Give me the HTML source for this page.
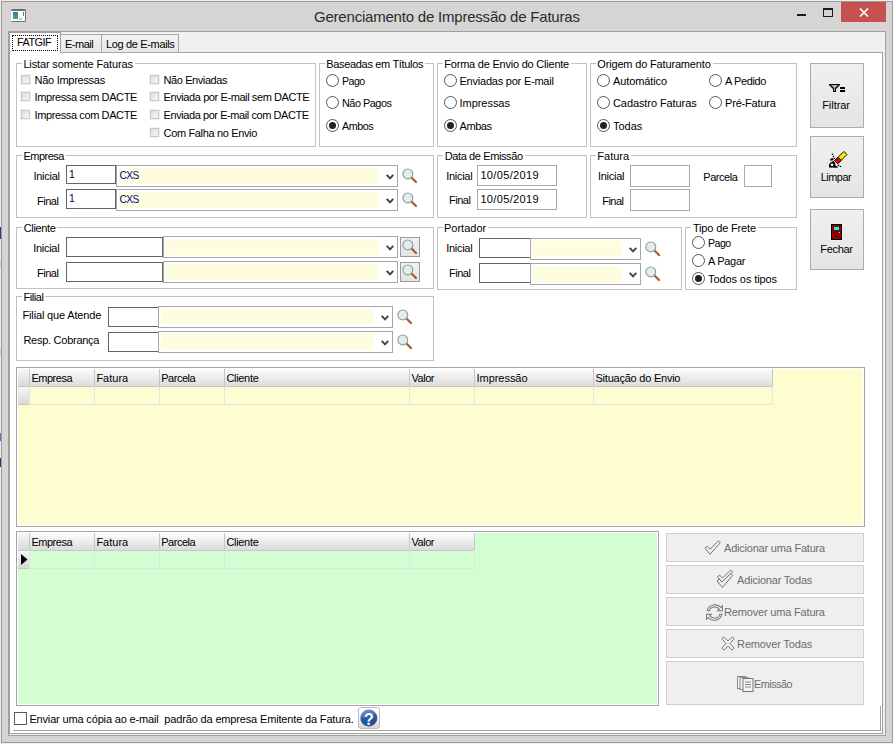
<!DOCTYPE html>
<html><head><meta charset="utf-8"><style>
html,body{margin:0;padding:0;}
body{width:893px;height:744px;position:relative;overflow:hidden;background:#eeeeee;font-family:"Liberation Sans", sans-serif;}
body div, body svg{position:absolute;}
div div{position:absolute;}
.t{white-space:pre;line-height:1;}
</style></head><body>
<div style="left:1px;top:1px;width:892px;height:742px;border:1px solid #9b9b9b;box-sizing:border-box;background:#d6d5d3"></div>
<svg style="left:11px;top:9px" width="15" height="13" viewBox="0 0 15 13"><defs><linearGradient id="ig" x1="0" y1="0" x2="0" y2="1"><stop offset="0" stop-color="#3d6db8"/><stop offset="0.5" stop-color="#3f9080"/><stop offset="1" stop-color="#4cb050"/></linearGradient><linearGradient id="ig2" x1="0" y1="0" x2="0" y2="1"><stop offset="0" stop-color="#3d6db8"/><stop offset="1" stop-color="#4cb050"/></linearGradient></defs><rect x="0" y="0" width="15" height="13" rx="1.5" fill="#6e7173"/><rect x="0" y="2" width="14" height="10" fill="#fff"/><rect x="2" y="3" width="5" height="7" fill="url(#ig)"/><rect x="12" y="3" width="1" height="4" fill="url(#ig2)"/><rect x="8" y="9" width="3" height="2" fill="#c8c8c8"/></svg>
<div class="t" style="left:314px;top:9.00px;font-size:15px;color:#2b2b2b;letter-spacing:-0.21px">Gerenciamento de Impressão de Faturas</div>
<div style="left:797px;top:14px;width:9px;height:2px;background:#1a1a1a"></div>
<div style="left:823px;top:8px;width:10px;height:9px;border:1px solid #1a1a1a;border-top-width:2px;box-sizing:border-box"></div>
<div style="left:841px;top:2px;width:45px;height:20px;background:#c75050"></div>
<svg style="left:859px;top:8px" width="10" height="9" viewBox="0 0 10 9"><path d="M1 0.5 L9 8.5 M9 0.5 L1 8.5" stroke="#fff" stroke-width="1.6"/></svg>
<div style="left:0px;top:227px;width:1px;height:12px;background:#2a3a8a"></div>
<div style="left:0px;top:260px;width:1px;height:8px;background:#a8e4f4"></div>
<div style="left:0px;top:348px;width:1px;height:8px;background:#ecd2b0"></div>
<div style="left:0px;top:433px;width:1px;height:8px;background:#4a7ad0"></div>
<div style="left:0px;top:458px;width:1px;height:9px;background:#2a3a90"></div>
<div style="left:8px;top:31px;width:878px;height:705px;border:1px solid #a0a0a0;box-sizing:border-box;background:#f0f0f0"></div>
<div style="left:9px;top:52px;width:874px;height:682px;border:1px solid #a0a0a0;box-sizing:border-box;background:#fff"></div>
<div style="left:60px;top:34px;width:42px;height:19px;border:1px solid #a9a9a9;box-sizing:border-box;background:linear-gradient(#f2f2f2,#e8e8e8)"></div>
<div style="left:101px;top:34px;width:78px;height:19px;border:1px solid #a9a9a9;box-sizing:border-box;background:linear-gradient(#f2f2f2,#e8e8e8)"></div>
<div style="left:9px;top:32px;width:52px;height:21px;border:1px solid #a0a0a0;border-bottom:none;box-sizing:border-box;background:#fff"></div>
<div style="left:12px;top:35px;width:46px;height:16px;border:1px dotted #000;box-sizing:border-box;border-radius:1px"></div>
<div class="t" style="left:17px;top:37.00px;font-size:10.86px;color:#000;letter-spacing:-0.503px;">FATGIF</div>
<div class="t" style="left:65px;top:39.00px;font-size:11.0px;color:#000;letter-spacing:-0.500px;">E-mail</div>
<div class="t" style="left:106px;top:39.00px;font-size:11.0px;color:#000;letter-spacing:-0.346px;">Log de E-mails</div>
<div style="left:16px;top:63px;width:300px;height:84px;border:1px solid #c2c2c2;box-sizing:border-box"></div>
<div style="left:22px;top:60px;width:113px;height:7px;background:#fff"></div>
<div style="left:319px;top:63px;width:115px;height:84px;border:1px solid #c2c2c2;box-sizing:border-box"></div>
<div style="left:325px;top:60px;width:100px;height:7px;background:#fff"></div>
<div style="left:437px;top:63px;width:150px;height:84px;border:1px solid #c2c2c2;box-sizing:border-box"></div>
<div style="left:443px;top:60px;width:128px;height:7px;background:#fff"></div>
<div style="left:590px;top:63px;width:207px;height:84px;border:1px solid #c2c2c2;box-sizing:border-box"></div>
<div style="left:596px;top:60px;width:117px;height:7px;background:#fff"></div>
<div style="left:16px;top:155px;width:418px;height:63px;border:1px solid #c2c2c2;box-sizing:border-box"></div>
<div style="left:22px;top:152px;width:44px;height:7px;background:#fff"></div>
<div style="left:437px;top:155px;width:150px;height:63px;border:1px solid #c2c2c2;box-sizing:border-box"></div>
<div style="left:443px;top:152px;width:82px;height:7px;background:#fff"></div>
<div style="left:590px;top:155px;width:207px;height:63px;border:1px solid #c2c2c2;box-sizing:border-box"></div>
<div style="left:596px;top:152px;width:35px;height:7px;background:#fff"></div>
<div style="left:16px;top:227px;width:418px;height:62px;border:1px solid #c2c2c2;box-sizing:border-box"></div>
<div style="left:22px;top:224px;width:35px;height:7px;background:#fff"></div>
<div style="left:437px;top:227px;width:245px;height:63px;border:1px solid #c2c2c2;box-sizing:border-box"></div>
<div style="left:443px;top:224px;width:45px;height:7px;background:#fff"></div>
<div style="left:685px;top:227px;width:112px;height:63px;border:1px solid #c2c2c2;box-sizing:border-box"></div>
<div style="left:691px;top:224px;width:67px;height:7px;background:#fff"></div>
<div style="left:16px;top:296px;width:418px;height:65px;border:1px solid #c2c2c2;box-sizing:border-box"></div>
<div style="left:22px;top:293px;width:23px;height:7px;background:#fff"></div>
<div class="t" style="left:23.4px;top:59.00px;font-size:11.0px;color:#000;letter-spacing:-0.143px;">Listar somente Faturas</div>
<div class="t" style="left:326.3px;top:59.00px;font-size:11.0px;color:#000;letter-spacing:-0.333px;">Baseadas em Títulos</div>
<div class="t" style="left:444.3px;top:59.00px;font-size:11.0px;color:#000;letter-spacing:-0.221px;">Forma de Envio do Cliente</div>
<div class="t" style="left:597.3px;top:59.00px;font-size:11.0px;color:#000;letter-spacing:-0.165px;">Origem do Faturamento</div>
<div class="t" style="left:23.4px;top:151.00px;font-size:11.0px;color:#000;letter-spacing:-0.500px;">Empresa</div>
<div class="t" style="left:444.8px;top:151.00px;font-size:11.0px;color:#000;letter-spacing:-0.393px;">Data de Emissão</div>
<div class="t" style="left:597.3px;top:151.00px;font-size:11.0px;color:#000;letter-spacing:0.000px;">Fatura</div>
<div class="t" style="left:23.7px;top:223.00px;font-size:11.0px;color:#000;letter-spacing:-0.333px;">Cliente</div>
<div class="t" style="left:444px;top:223.00px;font-size:11.0px;color:#000;letter-spacing:0.000px;">Portador</div>
<div class="t" style="left:692.9px;top:223.00px;font-size:11.0px;color:#000;letter-spacing:-0.150px;">Tipo de Frete</div>
<div class="t" style="left:23.4px;top:292.00px;font-size:11.0px;color:#000;letter-spacing:-0.400px;">Filial</div>
<div style="left:20px;top:74px;width:11px;height:11px;border:1px solid #f2f2f2;box-sizing:border-box"></div>
<div style="left:21px;top:75px;width:9px;height:9px;border:1px solid #c6c9cd;box-sizing:border-box;background:linear-gradient(135deg,#dcdfe3,#f6f6f6)"></div>
<div class="t" style="left:34.6px;top:75.00px;font-size:11.0px;color:#000;letter-spacing:-0.283px;">Não Impressas</div>
<div style="left:20px;top:91px;width:11px;height:11px;border:1px solid #f2f2f2;box-sizing:border-box"></div>
<div style="left:21px;top:92px;width:9px;height:9px;border:1px solid #c6c9cd;box-sizing:border-box;background:linear-gradient(135deg,#dcdfe3,#f6f6f6)"></div>
<div class="t" style="left:34.6px;top:92.00px;font-size:11.0px;color:#000;letter-spacing:-0.394px;">Impressa sem DACTE</div>
<div style="left:20px;top:109px;width:11px;height:11px;border:1px solid #f2f2f2;box-sizing:border-box"></div>
<div style="left:21px;top:110px;width:9px;height:9px;border:1px solid #c6c9cd;box-sizing:border-box;background:linear-gradient(135deg,#dcdfe3,#f6f6f6)"></div>
<div class="t" style="left:34.6px;top:110.00px;font-size:11.0px;color:#000;letter-spacing:-0.394px;">Impressa com DACTE</div>
<div style="left:149px;top:74px;width:11px;height:11px;border:1px solid #f2f2f2;box-sizing:border-box"></div>
<div style="left:150px;top:75px;width:9px;height:9px;border:1px solid #c6c9cd;box-sizing:border-box;background:linear-gradient(135deg,#dcdfe3,#f6f6f6)"></div>
<div class="t" style="left:163.6px;top:75.00px;font-size:11.0px;color:#000;letter-spacing:-0.418px;">Não Enviadas</div>
<div style="left:149px;top:91px;width:11px;height:11px;border:1px solid #f2f2f2;box-sizing:border-box"></div>
<div style="left:150px;top:92px;width:9px;height:9px;border:1px solid #c6c9cd;box-sizing:border-box;background:linear-gradient(135deg,#dcdfe3,#f6f6f6)"></div>
<div class="t" style="left:163.6px;top:92.00px;font-size:11.0px;color:#000;letter-spacing:-0.407px;">Enviada por E-mail sem DACTE</div>
<div style="left:149px;top:109px;width:11px;height:11px;border:1px solid #f2f2f2;box-sizing:border-box"></div>
<div style="left:150px;top:110px;width:9px;height:9px;border:1px solid #c6c9cd;box-sizing:border-box;background:linear-gradient(135deg,#dcdfe3,#f6f6f6)"></div>
<div class="t" style="left:163.6px;top:110.00px;font-size:11.0px;color:#000;letter-spacing:-0.430px;">Enviada por E-mail com DACTE</div>
<div style="left:149px;top:127px;width:11px;height:11px;border:1px solid #f2f2f2;box-sizing:border-box"></div>
<div style="left:150px;top:128px;width:9px;height:9px;border:1px solid #c6c9cd;box-sizing:border-box;background:linear-gradient(135deg,#dcdfe3,#f6f6f6)"></div>
<div class="t" style="left:163.6px;top:128.00px;font-size:11.0px;color:#000;letter-spacing:-0.353px;">Com Falha no Envio</div>
<div style="left:326px;top:74px;width:13px;height:13px;border:1px solid #555;box-sizing:border-box;border-radius:50%;background:#fff"></div>
<div class="t" style="left:342px;top:76.00px;font-size:10.58px;color:#000;letter-spacing:-0.502px;">Pago</div>
<div style="left:326px;top:96px;width:13px;height:13px;border:1px solid #555;box-sizing:border-box;border-radius:50%;background:#fff"></div>
<div class="t" style="left:342px;top:98.00px;font-size:10.9px;color:#000;letter-spacing:-0.500px;">Não Pagos</div>
<div style="left:326px;top:119px;width:13px;height:13px;border:1px solid #555;box-sizing:border-box;border-radius:50%;background:#fff"><div style="left:2px;top:2px;width:7px;height:7px;border-radius:50%;background:#222"></div></div>
<div class="t" style="left:342px;top:121.00px;font-size:10.77px;color:#000;letter-spacing:-0.497px;">Ambos</div>
<div style="left:444px;top:74px;width:13px;height:13px;border:1px solid #555;box-sizing:border-box;border-radius:50%;background:#fff"></div>
<div class="t" style="left:459.5px;top:76.00px;font-size:11.0px;color:#000;letter-spacing:-0.222px;">Enviadas por E-mail</div>
<div style="left:444px;top:96px;width:13px;height:13px;border:1px solid #555;box-sizing:border-box;border-radius:50%;background:#fff"></div>
<div class="t" style="left:459.5px;top:98.00px;font-size:11.0px;color:#000;letter-spacing:-0.037px;">Impressas</div>
<div style="left:444px;top:119px;width:13px;height:13px;border:1px solid #555;box-sizing:border-box;border-radius:50%;background:#fff"><div style="left:2px;top:2px;width:7px;height:7px;border-radius:50%;background:#222"></div></div>
<div class="t" style="left:459.5px;top:121.00px;font-size:11.0px;color:#000;letter-spacing:-0.425px;">Ambas</div>
<div style="left:597px;top:74px;width:13px;height:13px;border:1px solid #555;box-sizing:border-box;border-radius:50%;background:#fff"></div>
<div class="t" style="left:613px;top:76.00px;font-size:11.0px;color:#000;letter-spacing:-0.111px;">Automático</div>
<div style="left:597px;top:96px;width:13px;height:13px;border:1px solid #555;box-sizing:border-box;border-radius:50%;background:#fff"></div>
<div class="t" style="left:613px;top:98.00px;font-size:11.0px;color:#000;letter-spacing:-0.087px;">Cadastro Faturas</div>
<div style="left:597px;top:119px;width:13px;height:13px;border:1px solid #555;box-sizing:border-box;border-radius:50%;background:#fff"><div style="left:2px;top:2px;width:7px;height:7px;border-radius:50%;background:#222"></div></div>
<div class="t" style="left:613px;top:121.00px;font-size:11.0px;color:#000;letter-spacing:0.000px;">Todas</div>
<div style="left:709px;top:74px;width:13px;height:13px;border:1px solid #555;box-sizing:border-box;border-radius:50%;background:#fff"></div>
<div class="t" style="left:725px;top:76.00px;font-size:11.0px;color:#000;letter-spacing:-0.371px;">A Pedido</div>
<div style="left:709px;top:96px;width:13px;height:13px;border:1px solid #555;box-sizing:border-box;border-radius:50%;background:#fff"></div>
<div class="t" style="left:725px;top:98.00px;font-size:11.0px;color:#000;letter-spacing:-0.178px;">Pré-Fatura</div>
<div style="left:692px;top:236px;width:13px;height:13px;border:1px solid #555;box-sizing:border-box;border-radius:50%;background:#fff"></div>
<div class="t" style="left:708px;top:238.00px;font-size:10.58px;color:#000;letter-spacing:-0.502px;">Pago</div>
<div style="left:692px;top:254px;width:13px;height:13px;border:1px solid #555;box-sizing:border-box;border-radius:50%;background:#fff"></div>
<div class="t" style="left:708px;top:256.00px;font-size:11.0px;color:#000;letter-spacing:-0.283px;">A Pagar</div>
<div style="left:692px;top:272px;width:13px;height:13px;border:1px solid #555;box-sizing:border-box;border-radius:50%;background:#fff"><div style="left:2px;top:2px;width:7px;height:7px;border-radius:50%;background:#222"></div></div>
<div class="t" style="left:708px;top:274.00px;font-size:11.0px;color:#000;letter-spacing:-0.092px;">Todos os tipos</div>
<div style="left:810px;top:63px;width:54px;height:65px;border:1px solid #adadad;box-sizing:border-box;background:linear-gradient(#f0f0f0,#e4e4e4)"></div>
<svg style="left:826px;top:80px" width="20" height="13" viewBox="0 0 20 13"><path d="M3 4 H14 V5 L10 9 V12 H7 V9 L3 5 Z" fill="#000"/><path d="M5 5 H12 L9 8 V11 H8 V8 Z" fill="#b4b4b4"/><rect x="14" y="7" width="5" height="2" fill="#000"/><rect x="14" y="10" width="5" height="2" fill="#000"/></svg>
<div class="t" style="left:822.2px;top:100.00px;font-size:11.0px;color:#000;letter-spacing:-0.050px;">Filtrar</div>
<div style="left:810px;top:136px;width:54px;height:62px;border:1px solid #adadad;box-sizing:border-box;background:linear-gradient(#f0f0f0,#e4e4e4)"></div>
<svg style="left:824px;top:148px" width="26" height="24" viewBox="0 0 26 24"><g transform="rotate(-45 16.8 9.6)"><rect x="10.3" y="7.4" width="13" height="4.4" fill="#f4f000" stroke="#000" stroke-width="0.9"/><rect x="10.3" y="7.4" width="4.8" height="4.4" fill="#f00000" stroke="#000" stroke-width="0.9"/></g><path d="M5 19.6 L5 16.5 L6.5 14.5 L9.5 13 L11 14.5 L11.5 17.5 L13.8 19 L13.8 19.7 Z" fill="#000"/><ellipse cx="8" cy="16.8" rx="1.4" ry="1.2" fill="#fff"/><path d="M6 12.6 L6.3 11 L8.5 10 L10 10.8 L8.5 12.6 Z" fill="#000"/><circle cx="8.5" cy="6.3" r="0.8" fill="#000"/><circle cx="9.5" cy="8.5" r="0.8" fill="#000"/><circle cx="10.5" cy="10.5" r="0.7" fill="#000"/><circle cx="14.5" cy="17.4" r="0.8" fill="#000"/><circle cx="16.5" cy="18.5" r="0.8" fill="#000"/></svg>
<div class="t" style="left:820.8px;top:172.00px;font-size:10.9px;color:#000;letter-spacing:-0.498px;">Limpar</div>
<div style="left:810px;top:209px;width:54px;height:61px;border:1px solid #adadad;box-sizing:border-box;background:linear-gradient(#f0f0f0,#e4e4e4)"></div>
<svg style="left:830px;top:223px" width="13" height="18" viewBox="0 0 13 18"><rect x="1" y="1" width="11" height="16" fill="#000"/><rect x="2" y="2" width="9" height="14" fill="#9a0000"/><rect x="3" y="3" width="7" height="12" fill="#800000"/><rect x="4" y="4" width="5" height="3" fill="#00ffff"/><rect x="9" y="9" width="1" height="1" fill="#ffee00"/></svg>
<div class="t" style="left:820.2px;top:244.00px;font-size:11.0px;color:#000;letter-spacing:-0.280px;">Fechar</div>
<div class="t" style="left:33.5px;top:171.00px;font-size:11.0px;color:#000;letter-spacing:-0.283px;">Inicial</div>
<div class="t" style="left:37px;top:196.00px;font-size:11.0px;color:#000;letter-spacing:-0.500px;">Final</div>
<div style="left:66px;top:165px;width:50px;height:19px;border:1px solid #646464;box-sizing:border-box;background:#fff"></div>
<div class="t" style="left:69px;top:169.00px;font-size:10.5px;color:#000;">1</div>
<div style="left:66px;top:189px;width:50px;height:20px;border:1px solid #646464;box-sizing:border-box;background:#fff"></div>
<div class="t" style="left:69px;top:193.00px;font-size:10.5px;color:#000080;">1</div>
<div style="left:116px;top:165px;width:282px;height:22px;border:1px solid #a3a6ad;box-sizing:border-box;background:#fff"></div>
<div style="left:119px;top:168px;width:259px;height:16px;background:#fffde0"></div>
<svg style="left:386px;top:174px" width="8" height="6" viewBox="0 0 8 6"><path d="M0.7 0.9 L4 4.4 L7.3 0.9" fill="none" stroke="#444" stroke-width="2"/></svg>
<div class="t" style="left:119.5px;top:171.00px;font-size:10.19px;color:#000080;letter-spacing:-0.503px;">CXS</div>
<div style="left:116px;top:189px;width:282px;height:22px;border:1px solid #a3a6ad;box-sizing:border-box;background:#fff"></div>
<div style="left:119px;top:192px;width:259px;height:16px;background:#fffde0"></div>
<svg style="left:386px;top:198px" width="8" height="6" viewBox="0 0 8 6"><path d="M0.7 0.9 L4 4.4 L7.3 0.9" fill="none" stroke="#444" stroke-width="2"/></svg>
<div class="t" style="left:119.5px;top:195.00px;font-size:10.19px;color:#000080;letter-spacing:-0.503px;">CXS</div>
<svg style="left:402px;top:168px" width="16" height="16" viewBox="0 0 16 16"><line x1="9.2" y1="9.2" x2="14" y2="14" stroke="#a95a30" stroke-width="2.2" stroke-linecap="round"/><circle cx="5.8" cy="5.9" r="4.9" fill="#e6ecec" stroke="#8aa4a4" stroke-width="1.2"/></svg>
<svg style="left:402px;top:192px" width="16" height="16" viewBox="0 0 16 16"><line x1="9.2" y1="9.2" x2="14" y2="14" stroke="#a95a30" stroke-width="2.2" stroke-linecap="round"/><circle cx="5.8" cy="5.9" r="4.9" fill="#e6ecec" stroke="#8aa4a4" stroke-width="1.2"/></svg>
<div class="t" style="left:446.2px;top:171.00px;font-size:11.0px;color:#000;letter-spacing:-0.283px;">Inicial</div>
<div class="t" style="left:449px;top:195.00px;font-size:11.0px;color:#000;letter-spacing:-0.500px;">Final</div>
<div style="left:477px;top:165px;width:80px;height:21px;border:1px solid #a7a9b0;box-sizing:border-box;background:#fff"></div>
<div class="t" style="left:480.4px;top:170.00px;font-size:11.0px;color:#000;letter-spacing:0.344px;">10/05/2019</div>
<div style="left:477px;top:189px;width:80px;height:21px;border:1px solid #a7a9b0;box-sizing:border-box;background:#fff"></div>
<div class="t" style="left:480.4px;top:194.00px;font-size:11.0px;color:#000;letter-spacing:0.344px;">10/05/2019</div>
<div class="t" style="left:598px;top:171.00px;font-size:11.0px;color:#000;letter-spacing:-0.283px;">Inicial</div>
<div class="t" style="left:602.2px;top:196.00px;font-size:11.0px;color:#000;letter-spacing:-0.500px;">Final</div>
<div style="left:630px;top:165px;width:60px;height:22px;border:1px solid #a7a9b0;box-sizing:border-box;background:#fff"></div>
<div style="left:630px;top:189px;width:60px;height:22px;border:1px solid #a7a9b0;box-sizing:border-box;background:#fff"></div>
<div class="t" style="left:703.3px;top:172.00px;font-size:11.0px;color:#000;letter-spacing:-0.467px;">Parcela</div>
<div style="left:744px;top:165px;width:28px;height:22px;border:1px solid #a7a9b0;box-sizing:border-box;background:#fff"></div>
<div class="t" style="left:33.2px;top:243.00px;font-size:11.0px;color:#000;letter-spacing:-0.283px;">Inicial</div>
<div class="t" style="left:37px;top:268.00px;font-size:11.0px;color:#000;letter-spacing:-0.500px;">Final</div>
<div style="left:66px;top:237px;width:97px;height:20px;border:1px solid #646464;box-sizing:border-box;background:#fff"></div>
<div style="left:66px;top:262px;width:97px;height:20px;border:1px solid #646464;box-sizing:border-box;background:#fff"></div>
<div style="left:163px;top:236px;width:235px;height:22px;border:1px solid #a3a6ad;box-sizing:border-box;background:#fff"></div>
<div style="left:166px;top:239px;width:212px;height:16px;background:#fffde0"></div>
<svg style="left:386px;top:245px" width="8" height="6" viewBox="0 0 8 6"><path d="M0.7 0.9 L4 4.4 L7.3 0.9" fill="none" stroke="#444" stroke-width="2"/></svg>
<div style="left:163px;top:261px;width:235px;height:22px;border:1px solid #a3a6ad;box-sizing:border-box;background:#fff"></div>
<div style="left:166px;top:264px;width:212px;height:16px;background:#fffde0"></div>
<svg style="left:386px;top:270px" width="8" height="6" viewBox="0 0 8 6"><path d="M0.7 0.9 L4 4.4 L7.3 0.9" fill="none" stroke="#444" stroke-width="2"/></svg>
<div style="left:400px;top:237px;width:20px;height:20px;border:1px solid #9a9a9a;box-sizing:border-box;background:linear-gradient(#f2f2f2,#e4e4e4)"></div>
<svg style="left:402px;top:239px" width="16" height="16" viewBox="0 0 16 16"><line x1="9.2" y1="9.2" x2="14" y2="14" stroke="#a95a30" stroke-width="2.2" stroke-linecap="round"/><circle cx="5.8" cy="5.9" r="4.9" fill="#e6ecec" stroke="#8aa4a4" stroke-width="1.2"/></svg>
<div style="left:400px;top:262px;width:20px;height:20px;border:1px solid #9a9a9a;box-sizing:border-box;background:linear-gradient(#f2f2f2,#e4e4e4)"></div>
<svg style="left:402px;top:264px" width="16" height="16" viewBox="0 0 16 16"><line x1="9.2" y1="9.2" x2="14" y2="14" stroke="#a95a30" stroke-width="2.2" stroke-linecap="round"/><circle cx="5.8" cy="5.9" r="4.9" fill="#e6ecec" stroke="#8aa4a4" stroke-width="1.2"/></svg>
<div class="t" style="left:446.2px;top:243.00px;font-size:11.0px;color:#000;letter-spacing:-0.283px;">Inicial</div>
<div class="t" style="left:449px;top:268.00px;font-size:11.0px;color:#000;letter-spacing:-0.500px;">Final</div>
<div style="left:479px;top:238px;width:52px;height:20px;border:1px solid #646464;box-sizing:border-box;background:#fff"></div>
<div style="left:479px;top:263px;width:52px;height:20px;border:1px solid #646464;box-sizing:border-box;background:#fff"></div>
<div style="left:530px;top:238px;width:111px;height:22px;border:1px solid #a3a6ad;box-sizing:border-box;background:#fff"></div>
<div style="left:533px;top:241px;width:88px;height:16px;background:#fffde0"></div>
<svg style="left:629px;top:247px" width="8" height="6" viewBox="0 0 8 6"><path d="M0.7 0.9 L4 4.4 L7.3 0.9" fill="none" stroke="#444" stroke-width="2"/></svg>
<div style="left:530px;top:263px;width:111px;height:22px;border:1px solid #a3a6ad;box-sizing:border-box;background:#fff"></div>
<div style="left:533px;top:266px;width:88px;height:16px;background:#fffde0"></div>
<svg style="left:629px;top:272px" width="8" height="6" viewBox="0 0 8 6"><path d="M0.7 0.9 L4 4.4 L7.3 0.9" fill="none" stroke="#444" stroke-width="2"/></svg>
<svg style="left:645px;top:241px" width="16" height="16" viewBox="0 0 16 16"><line x1="9.2" y1="9.2" x2="14" y2="14" stroke="#a95a30" stroke-width="2.2" stroke-linecap="round"/><circle cx="5.8" cy="5.9" r="4.9" fill="#e6ecec" stroke="#8aa4a4" stroke-width="1.2"/></svg>
<svg style="left:645px;top:266px" width="16" height="16" viewBox="0 0 16 16"><line x1="9.2" y1="9.2" x2="14" y2="14" stroke="#a95a30" stroke-width="2.2" stroke-linecap="round"/><circle cx="5.8" cy="5.9" r="4.9" fill="#e6ecec" stroke="#8aa4a4" stroke-width="1.2"/></svg>
<div class="t" style="left:22.5px;top:310.00px;font-size:11.0px;color:#000;letter-spacing:-0.156px;">Filial que Atende</div>
<div class="t" style="left:23.4px;top:335.00px;font-size:11.0px;color:#000;letter-spacing:-0.262px;">Resp. Cobrança</div>
<div style="left:108px;top:307px;width:51px;height:20px;border:1px solid #646464;box-sizing:border-box;background:#fff"></div>
<div style="left:108px;top:332px;width:51px;height:20px;border:1px solid #646464;box-sizing:border-box;background:#fff"></div>
<div style="left:158px;top:306px;width:235px;height:22px;border:1px solid #a3a6ad;box-sizing:border-box;background:#fff"></div>
<div style="left:161px;top:309px;width:212px;height:16px;background:#fffde0"></div>
<svg style="left:381px;top:315px" width="8" height="6" viewBox="0 0 8 6"><path d="M0.7 0.9 L4 4.4 L7.3 0.9" fill="none" stroke="#444" stroke-width="2"/></svg>
<div style="left:158px;top:331px;width:235px;height:22px;border:1px solid #a3a6ad;box-sizing:border-box;background:#fff"></div>
<div style="left:161px;top:334px;width:212px;height:16px;background:#fffde0"></div>
<svg style="left:381px;top:340px" width="8" height="6" viewBox="0 0 8 6"><path d="M0.7 0.9 L4 4.4 L7.3 0.9" fill="none" stroke="#444" stroke-width="2"/></svg>
<svg style="left:397px;top:309px" width="16" height="16" viewBox="0 0 16 16"><line x1="9.2" y1="9.2" x2="14" y2="14" stroke="#a95a30" stroke-width="2.2" stroke-linecap="round"/><circle cx="5.8" cy="5.9" r="4.9" fill="#e6ecec" stroke="#8aa4a4" stroke-width="1.2"/></svg>
<svg style="left:397px;top:334px" width="16" height="16" viewBox="0 0 16 16"><line x1="9.2" y1="9.2" x2="14" y2="14" stroke="#a95a30" stroke-width="2.2" stroke-linecap="round"/><circle cx="5.8" cy="5.9" r="4.9" fill="#e6ecec" stroke="#8aa4a4" stroke-width="1.2"/></svg>
<div style="left:16px;top:367px;width:849px;height:160px;border:1px solid #a4a5ac;box-sizing:border-box;background:#fff"></div>
<div style="left:18px;top:369px;width:845px;height:156px;background:#fefdd0"></div>
<div style="left:18px;top:369px;width:12px;height:18px;background:linear-gradient(#f7f7f7,#d9d9d9);border-bottom:1px solid #c8c8c8;box-sizing:border-box"></div>
<div style="left:18px;top:387px;width:12px;height:18px;background:linear-gradient(#f7f7f7,#d9d9d9);border-bottom:1px solid #c8c8c8;box-sizing:border-box"></div>
<div style="left:29px;top:369px;width:66px;height:18px;background:linear-gradient(#fdfdfd,#dcdcdc);border-left:1px solid #c6c6c6;border-right:1px solid #c6c6c6;border-bottom:1px solid #c6c6c6;box-sizing:border-box"></div>
<div style="left:29px;top:386px;width:66px;height:19px;border-left:1px solid #e4e4e4;border-right:1px solid #e4e4e4;border-bottom:1px solid #e4e4e4;box-sizing:border-box"></div>
<div style="left:94px;top:369px;width:66px;height:18px;background:linear-gradient(#fdfdfd,#dcdcdc);border-left:1px solid #c6c6c6;border-right:1px solid #c6c6c6;border-bottom:1px solid #c6c6c6;box-sizing:border-box"></div>
<div style="left:94px;top:386px;width:66px;height:19px;border-left:1px solid #e4e4e4;border-right:1px solid #e4e4e4;border-bottom:1px solid #e4e4e4;box-sizing:border-box"></div>
<div style="left:159px;top:369px;width:66px;height:18px;background:linear-gradient(#fdfdfd,#dcdcdc);border-left:1px solid #c6c6c6;border-right:1px solid #c6c6c6;border-bottom:1px solid #c6c6c6;box-sizing:border-box"></div>
<div style="left:159px;top:386px;width:66px;height:19px;border-left:1px solid #e4e4e4;border-right:1px solid #e4e4e4;border-bottom:1px solid #e4e4e4;box-sizing:border-box"></div>
<div style="left:224px;top:369px;width:186px;height:18px;background:linear-gradient(#fdfdfd,#dcdcdc);border-left:1px solid #c6c6c6;border-right:1px solid #c6c6c6;border-bottom:1px solid #c6c6c6;box-sizing:border-box"></div>
<div style="left:224px;top:386px;width:186px;height:19px;border-left:1px solid #e4e4e4;border-right:1px solid #e4e4e4;border-bottom:1px solid #e4e4e4;box-sizing:border-box"></div>
<div style="left:409px;top:369px;width:66px;height:18px;background:linear-gradient(#fdfdfd,#dcdcdc);border-left:1px solid #c6c6c6;border-right:1px solid #c6c6c6;border-bottom:1px solid #c6c6c6;box-sizing:border-box"></div>
<div style="left:409px;top:386px;width:66px;height:19px;border-left:1px solid #e4e4e4;border-right:1px solid #e4e4e4;border-bottom:1px solid #e4e4e4;box-sizing:border-box"></div>
<div style="left:474px;top:369px;width:120px;height:18px;background:linear-gradient(#fdfdfd,#dcdcdc);border-left:1px solid #c6c6c6;border-right:1px solid #c6c6c6;border-bottom:1px solid #c6c6c6;box-sizing:border-box"></div>
<div style="left:474px;top:386px;width:120px;height:19px;border-left:1px solid #e4e4e4;border-right:1px solid #e4e4e4;border-bottom:1px solid #e4e4e4;box-sizing:border-box"></div>
<div style="left:593px;top:369px;width:180px;height:18px;background:linear-gradient(#fdfdfd,#dcdcdc);border-left:1px solid #c6c6c6;border-right:1px solid #c6c6c6;border-bottom:1px solid #c6c6c6;box-sizing:border-box"></div>
<div style="left:593px;top:386px;width:180px;height:19px;border-left:1px solid #e4e4e4;border-right:1px solid #e4e4e4;border-bottom:1px solid #e4e4e4;box-sizing:border-box"></div>
<div class="t" style="left:31.5px;top:373.00px;font-size:11.0px;color:#000;letter-spacing:-0.500px;">Empresa</div>
<div class="t" style="left:96.4px;top:373.00px;font-size:11.0px;color:#000;letter-spacing:0.000px;">Fatura</div>
<div class="t" style="left:161.2px;top:373.00px;font-size:11.0px;color:#000;letter-spacing:-0.467px;">Parcela</div>
<div class="t" style="left:226.5px;top:373.00px;font-size:11.0px;color:#000;letter-spacing:-0.333px;">Cliente</div>
<div class="t" style="left:411.6px;top:373.00px;font-size:11.0px;color:#000;letter-spacing:-0.500px;">Valor</div>
<div class="t" style="left:476.5px;top:373.00px;font-size:11.0px;color:#000;letter-spacing:-0.037px;">Impressão</div>
<div class="t" style="left:595.5px;top:373.00px;font-size:11.0px;color:#000;letter-spacing:-0.231px;">Situação do Envio</div>
<div style="left:16px;top:531px;width:643px;height:175px;border:1px solid #a4a5ac;box-sizing:border-box;background:#fff"></div>
<div style="left:18px;top:533px;width:639px;height:171px;background:#d2fed2"></div>
<div style="left:18px;top:533px;width:12px;height:18px;background:linear-gradient(#f7f7f7,#d9d9d9);border-bottom:1px solid #c8c8c8;box-sizing:border-box"></div>
<div style="left:18px;top:551px;width:12px;height:18px;background:linear-gradient(#f7f7f7,#d9d9d9);border-bottom:1px solid #c8c8c8;box-sizing:border-box"></div>
<div style="left:29px;top:533px;width:66px;height:18px;background:linear-gradient(#fdfdfd,#dcdcdc);border-left:1px solid #c6c6c6;border-right:1px solid #c6c6c6;border-bottom:1px solid #c6c6c6;box-sizing:border-box"></div>
<div style="left:29px;top:550px;width:66px;height:19px;border-left:1px solid #e4e4e4;border-right:1px solid #e4e4e4;border-bottom:1px solid #e4e4e4;box-sizing:border-box"></div>
<div style="left:94px;top:533px;width:66px;height:18px;background:linear-gradient(#fdfdfd,#dcdcdc);border-left:1px solid #c6c6c6;border-right:1px solid #c6c6c6;border-bottom:1px solid #c6c6c6;box-sizing:border-box"></div>
<div style="left:94px;top:550px;width:66px;height:19px;border-left:1px solid #e4e4e4;border-right:1px solid #e4e4e4;border-bottom:1px solid #e4e4e4;box-sizing:border-box"></div>
<div style="left:159px;top:533px;width:66px;height:18px;background:linear-gradient(#fdfdfd,#dcdcdc);border-left:1px solid #c6c6c6;border-right:1px solid #c6c6c6;border-bottom:1px solid #c6c6c6;box-sizing:border-box"></div>
<div style="left:159px;top:550px;width:66px;height:19px;border-left:1px solid #e4e4e4;border-right:1px solid #e4e4e4;border-bottom:1px solid #e4e4e4;box-sizing:border-box"></div>
<div style="left:224px;top:533px;width:186px;height:18px;background:linear-gradient(#fdfdfd,#dcdcdc);border-left:1px solid #c6c6c6;border-right:1px solid #c6c6c6;border-bottom:1px solid #c6c6c6;box-sizing:border-box"></div>
<div style="left:224px;top:550px;width:186px;height:19px;border-left:1px solid #e4e4e4;border-right:1px solid #e4e4e4;border-bottom:1px solid #e4e4e4;box-sizing:border-box"></div>
<div style="left:409px;top:533px;width:66px;height:18px;background:linear-gradient(#fdfdfd,#dcdcdc);border-left:1px solid #c6c6c6;border-right:1px solid #c6c6c6;border-bottom:1px solid #c6c6c6;box-sizing:border-box"></div>
<div style="left:409px;top:550px;width:66px;height:19px;border-left:1px solid #e4e4e4;border-right:1px solid #e4e4e4;border-bottom:1px solid #e4e4e4;box-sizing:border-box"></div>
<svg style="left:21px;top:554px" width="7" height="11" viewBox="0 0 7 11"><path d="M0 0 L6.5 5.5 L0 11 Z" fill="#000"/></svg>
<div class="t" style="left:31.5px;top:537.00px;font-size:11.0px;color:#000;letter-spacing:-0.500px;">Empresa</div>
<div class="t" style="left:96.4px;top:537.00px;font-size:11.0px;color:#000;letter-spacing:0.000px;">Fatura</div>
<div class="t" style="left:161.2px;top:537.00px;font-size:11.0px;color:#000;letter-spacing:-0.467px;">Parcela</div>
<div class="t" style="left:226.5px;top:537.00px;font-size:11.0px;color:#000;letter-spacing:-0.333px;">Cliente</div>
<div class="t" style="left:411.6px;top:537.00px;font-size:11.0px;color:#000;letter-spacing:-0.500px;">Valor</div>
<div style="left:666px;top:533px;width:198px;height:29px;border:1px solid #cfcfcf;box-sizing:border-box;background:#efefef"></div>
<div style="left:666px;top:565px;width:198px;height:29px;border:1px solid #cfcfcf;box-sizing:border-box;background:#efefef"></div>
<div style="left:666px;top:597px;width:198px;height:29px;border:1px solid #cfcfcf;box-sizing:border-box;background:#efefef"></div>
<div style="left:666px;top:629px;width:198px;height:29px;border:1px solid #cfcfcf;box-sizing:border-box;background:#efefef"></div>
<div style="left:666px;top:661px;width:198px;height:44px;border:1px solid #cfcfcf;box-sizing:border-box;background:#efefef"></div>
<div class="t" style="left:724px;top:543.00px;font-size:11.0px;color:#6d6d6d;letter-spacing:-0.211px;">Adicionar uma Fatura</div>
<div class="t" style="left:737.1px;top:575.00px;font-size:11.0px;color:#6d6d6d;letter-spacing:-0.200px;">Adicionar Todas</div>
<div class="t" style="left:724px;top:607.00px;font-size:11.0px;color:#6d6d6d;letter-spacing:-0.176px;">Remover uma Fatura</div>
<div class="t" style="left:737.1px;top:639.00px;font-size:11.0px;color:#6d6d6d;letter-spacing:-0.150px;">Remover Todas</div>
<div class="t" style="left:754.1px;top:679.00px;font-size:10.79px;color:#6d6d6d;letter-spacing:-0.500px;">Emissão</div>
<svg style="left:704px;top:540px" width="17" height="16" viewBox="0 0 17 16"><path d="M1 8.2 L3 6.2 L6 9.2 L14.5 0.8 L16.3 2.6 L6 14.3 Z" fill="none" stroke="#737373" stroke-width="1"/></svg>
<svg style="left:716px;top:569px" width="18" height="20" viewBox="0 0 18 20"><path d="M1.5 8 L3.5 6 L6.5 9 L14.8 1 L16.6 2.8 L6.5 13.5 Z" fill="#efefef" stroke="#737373" stroke-width="1"/><path d="M1 12 L3 10 L6 13 L14.8 4.6 L16.6 6.4 L6.5 18.5 Z" fill="#efefef" stroke="#737373" stroke-width="1"/></svg>
<svg style="left:705px;top:603px" width="19" height="19" viewBox="0 0 18 17" preserveAspectRatio="none"><path d="M2 7 Q3 2 9 1.5 Q13 1.5 15 4 L16.5 2.5 L16.5 7 L12 7 L13.5 5.5 Q12 3.5 9 3.5 Q5 3.5 4 7 Z" fill="none" stroke="#777" stroke-width="0.9"/><path d="M16 10 Q15 15 9 15.5 Q5 15.5 3 13 L1.5 14.5 L1.5 10 L6 10 L4.5 11.5 Q6 13.5 9 13.5 Q13 13.5 14 10 Z" fill="none" stroke="#777" stroke-width="0.9"/></svg>
<svg style="left:721px;top:636px" width="15" height="16" viewBox="0 0 15 16"><path d="M0.8 2.8 L2.8 0.8 L7 5 L11.2 0.8 L13.2 2.8 L9 7.5 L13.2 12.2 L11.2 14.2 L7 10 L2.8 14.2 L0.8 12.2 L5 7.5 Z" fill="none" stroke="#777" stroke-width="1" stroke-linejoin="round"/></svg>
<svg style="left:737px;top:675px" width="17" height="17" viewBox="0 0 17 17"><rect x="0.5" y="1.5" width="8" height="12" fill="#f4f4f4" stroke="#888"/><rect x="3" y="2.5" width="8" height="12" fill="#f4f4f4" stroke="#888"/><rect x="6" y="3.5" width="10" height="13" fill="#f4f4f4" stroke="#777"/><path d="M8 7 H14 M8 9.5 H14 M8 12 H14" stroke="#888"/></svg>
<div style="left:14px;top:712px;width:13px;height:13px;border:1px solid #5a5a5a;box-sizing:border-box;background:#fff"></div>
<div class="t" style="left:29.4px;top:714.00px;font-size:11.0px;color:#000;letter-spacing:-0.158px;">Enviar uma cópia ao e-mail  padrão da empresa Emitente da Fatura.</div>
<div style="left:358px;top:707px;width:22px;height:22px;border:1px solid #bdbdbd;border-radius:3px;box-sizing:border-box;background:linear-gradient(#fdfdfd 30%,#d6d6d6)"></div>
<svg style="left:360px;top:709px" width="18" height="18" viewBox="0 0 18 18"><defs><linearGradient id="hg" x1="0" y1="0" x2="0.3" y2="1"><stop offset="0" stop-color="#6f95cf"/><stop offset="0.45" stop-color="#4a76bb"/><stop offset="0.5" stop-color="#2d5aa3"/><stop offset="1" stop-color="#234d96"/></linearGradient></defs><circle cx="8.8" cy="9.1" r="8.5" fill="url(#hg)"/><text x="8.8" y="15.6" font-family="Liberation Sans" font-weight="bold" font-size="16" fill="#fff" text-anchor="middle">?</text></svg>
<div style="left:13px;top:730px;width:868px;height:1px;background:#a0a0a0"></div>
<div style="left:880px;top:706px;width:1px;height:25px;background:#a0a0a0"></div>
</body></html>
